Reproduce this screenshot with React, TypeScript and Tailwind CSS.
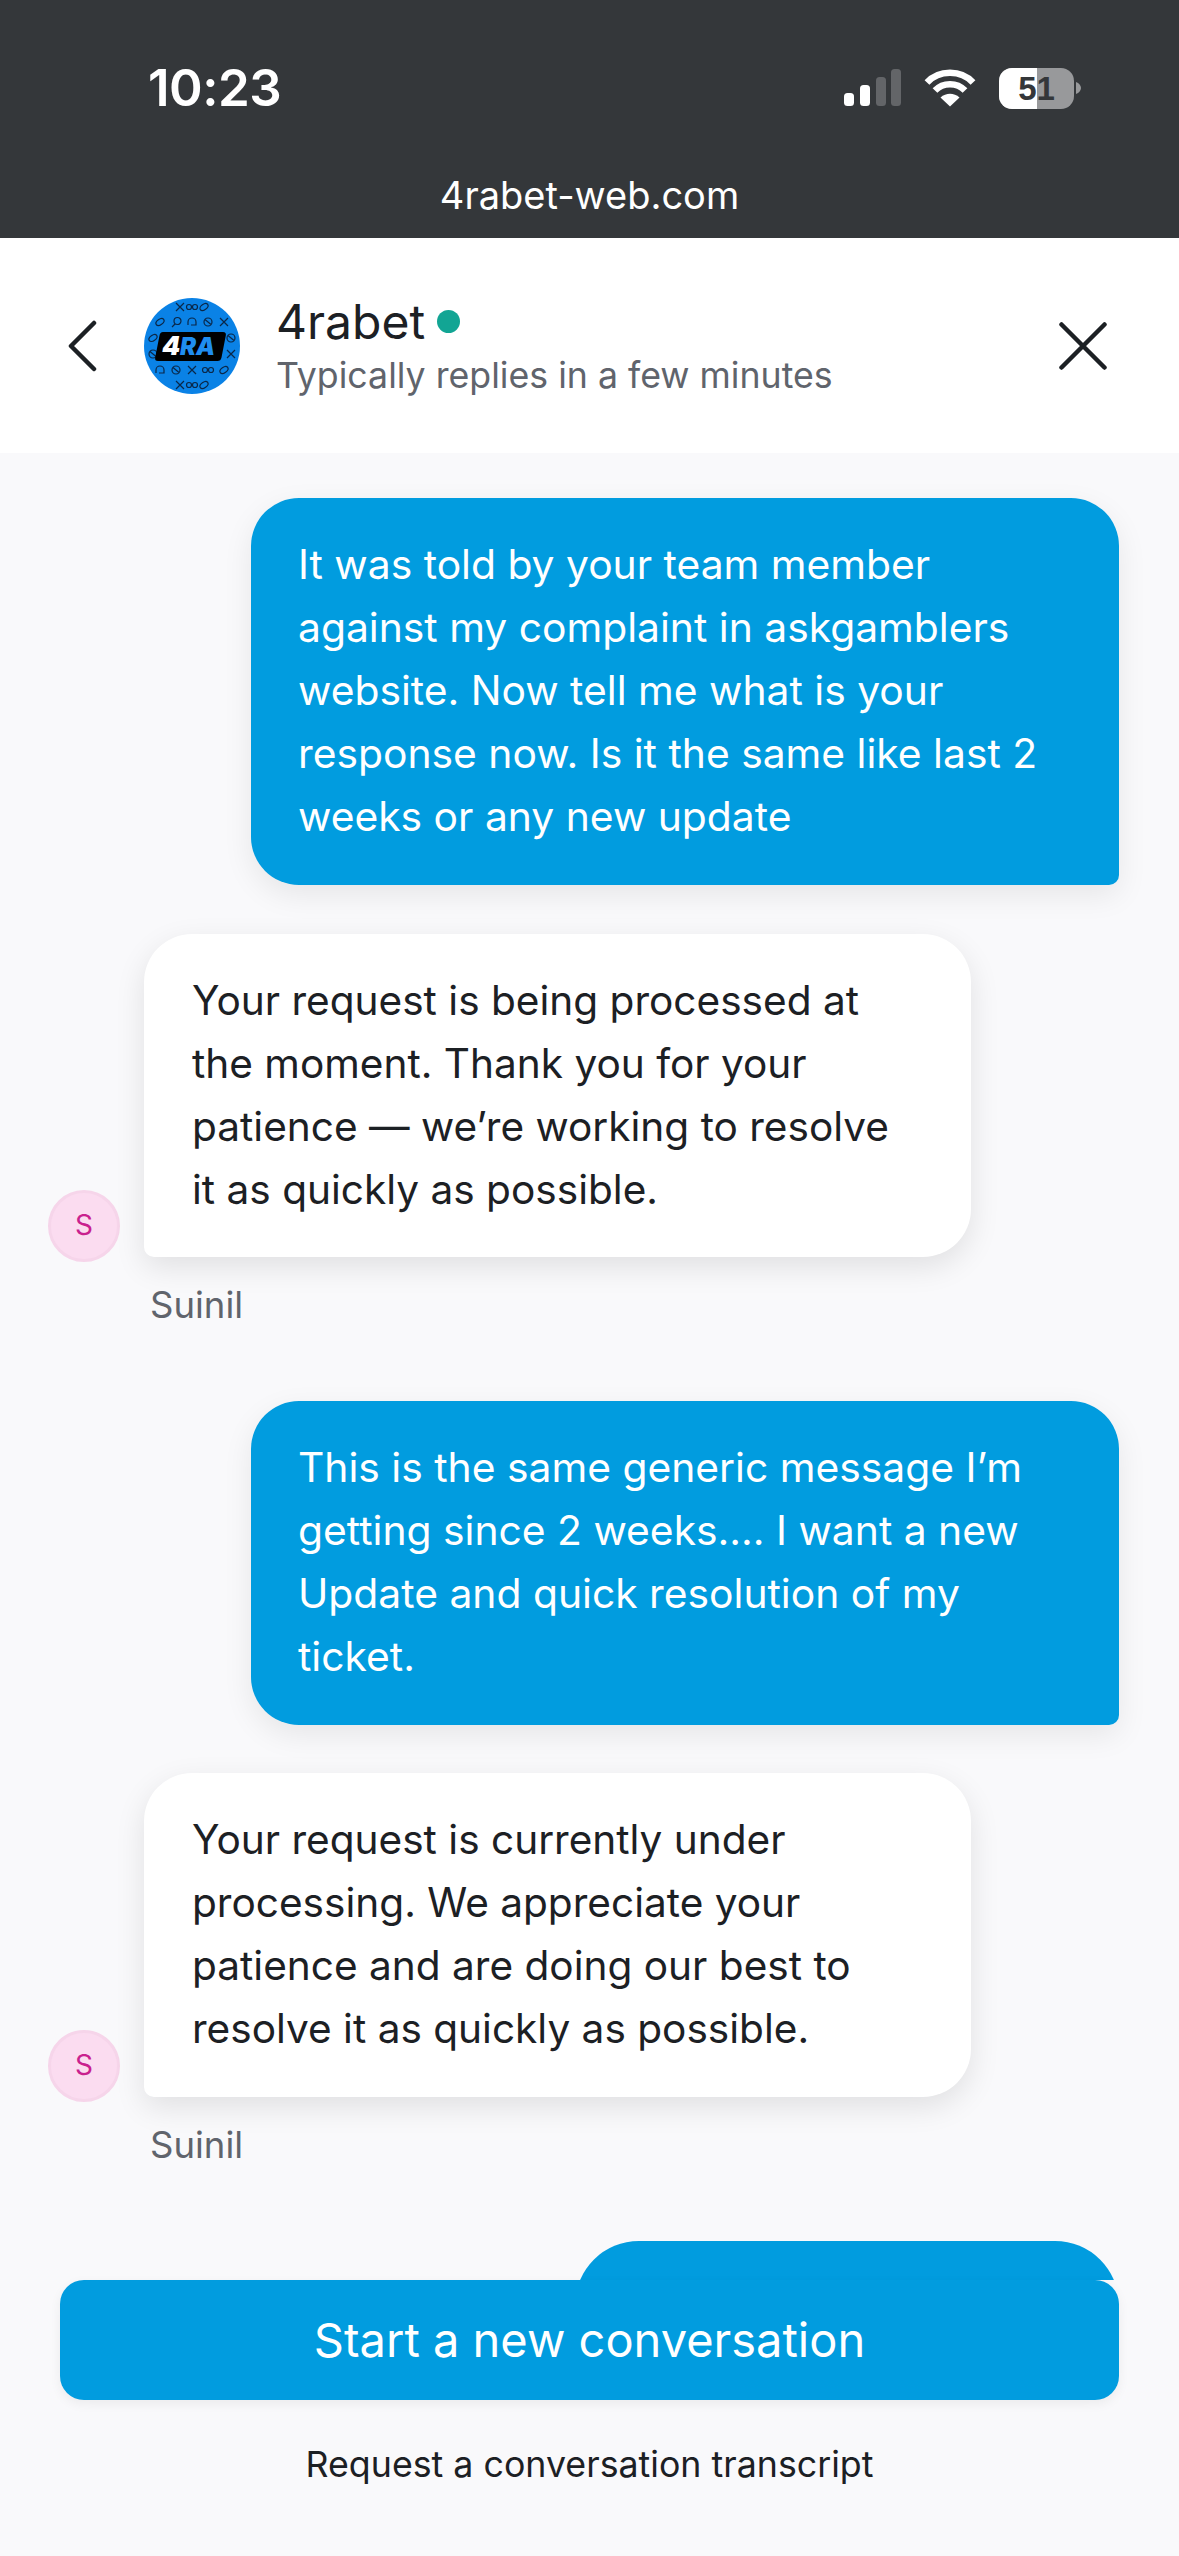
import React from "react";

const font = { fontFamily: "Inter, 'Noto Sans', sans-serif" };

function Logo() {
  const ink = "#0a2748";
  const kinds = ["ball", "cross", "bike", "oval", "racket", "helmet"];
  const rows: [number, number[]][] = [
    [9, [36, 48, 60]],
    [24, [16, 32, 48, 64, 80]],
    [72, [16, 32, 48, 64, 80]],
    [87, [36, 48, 60]],
  ];
  const items: [number, number, string][] = [];
  rows.forEach(([y, xs], r) => xs.forEach((x, i) => items.push([x, y, kinds[(i + r * 2 + 1) % kinds.length]])));
  items.push([9, 40, "oval"], [87, 40, "ball"], [9, 56, "ball"], [87, 56, "cross"]);
  return (
    <svg width="96" height="96" viewBox="0 0 96 96" className="shrink-0">
      <circle cx="48" cy="48" r="48" fill="#0a82e6" />
      <g fill="none" stroke={ink} strokeWidth="1.2">
        {items.map(([x, y, k], i) => {
          if (k === "ball") return <path key={i} d={`M${x - 4} ${y}a4 4 0 1 0 8 0a4 4 0 1 0-8 0M${x - 3} ${y - 2.500}L${x + 3} ${y + 2.500}`} />;
          if (k === "cross") return <path key={i} d={`M${x - 4} ${y - 4}L${x + 4} ${y + 4}M${x + 4} ${y - 4}L${x - 4} ${y + 4}`} />;
          if (k === "bike") return <path key={i} d={`M${x - 5.500} ${y}a2.500 2.500 0 1 0 5 0a2.500 2.500 0 1 0-5 0M${x + 0.500} ${y}a2.500 2.500 0 1 0 5 0a2.500 2.500 0 1 0-5 0`} />;
          if (k === "oval") return <ellipse key={i} cx={x} cy={y} rx="4.500" ry="2.800" transform={`rotate(-35 ${x} ${y})`} />;
          if (k === "racket") return <path key={i} d={`M${x - 2} ${y - 1}a3.500 3.500 0 1 0 7 0a3.500 3.500 0 1 0-7 0M${x - 1} ${y + 2}L${x - 4} ${y + 5}`} />;
          return <path key={i} d={`M${x - 4} ${y + 3}V${y}a4 4 0 0 1 8 0V${y + 3}H${x - 1}`} />;
        })}
      </g>
      <path d="M19 34H79Q82.500 34 81.800 37.500L77.500 59.500Q76.800 63 73.500 63H14Q10.500 63 11.200 59.500L15.500 37.500Q16 34 19 34Z" fill="#000" />
      <text x="18" y="57" fontFamily="Inter, sans-serif" fontStyle="italic" fontWeight="900" fontSize="26" fill="#fff">4</text>
      <text x="36" y="57" fontFamily="Inter, sans-serif" fontStyle="italic" fontWeight="900" fontSize="24" fill="#1f8df0">RA</text>
    </svg>
  );
}

function StatusIcons() {
  return (
    <div className="flex items-center">
      <svg width="58" height="38" viewBox="0 0 58 38" className="block">
        <rect x="0" y="24" width="10" height="13" rx="3.500" fill="#fff" />
        <rect x="16" y="16" width="10" height="21" rx="3.500" fill="#fff" />
        <rect x="32" y="8" width="10" height="29" rx="3.500" fill="#636568" />
        <rect x="47" y="0" width="10" height="37" rx="3.500" fill="#636568" />
      </svg>
      <svg width="52" height="38" viewBox="0 0 52 38" className="ml-[22px] block">
        <path d="M3 13.500C15 0.500 37 0.500 49 13.500" fill="none" stroke="#fff" strokeWidth="6.500" />
        <path d="M11 21.500C19 13 33 13 41 21.500" fill="none" stroke="#fff" strokeWidth="6.500" />
        <path d="M16.500 28.500C22 23.500 30 23.500 35.500 28.500L26 37.500Z" fill="#fff" />
      </svg>
      <div className="relative ml-[23px] h-[41px] w-[75px] overflow-hidden rounded-[13px] bg-[#98999b]">
        <div className="absolute left-0 top-0 h-full w-[38px] bg-white" />
        <div className="absolute inset-0 flex items-center justify-center text-[33px] font-bold leading-none text-[#34373a]" style={{ fontFamily: "'Liberation Sans', sans-serif" }}>
          51
        </div>
      </div>
      <svg width="5" height="12" viewBox="0 0 5 12" className="ml-[2px] block">
        <path d="M0 0C3 1 5 3.500 5 6C5 8.500 3 11 0 12Z" fill="#98999b" />
      </svg>
    </div>
  );
}

function UserBubble({ lines }: { lines: string[] }) {
  return (
    <div className="ml-auto w-[868px] rounded-[48px] rounded-br-[10px] bg-[#019cdf] pb-[37px] pl-[47px] pr-[40px] pt-[35px] text-[40.8px] leading-[63px] text-white shadow-[0_10px_30px_rgba(0,0,0,0.08)]">
      {lines.map((l) => (
        <div key={l} className="whitespace-nowrap">{l}</div>
      ))}
    </div>
  );
}

function BotBubble({ lines, tall }: { lines: string[]; tall?: boolean }) {
  return (
    <div className="flex flex-col">
      <div className="flex items-end">
        <div className="mb-[-5px] flex h-[72px] w-[72px] shrink-0 items-center justify-center rounded-full border-[3px] border-[#f6d5ea] bg-[#fbdcf0] pb-[2px] text-[28px] text-[#c9218e]">
          S
        </div>
        <div className={`${tall ? "pb-[37px]" : "pb-[36px]"} ml-[24px] w-[827px] rounded-[48px] rounded-bl-[10px] bg-white pl-[48px] pr-[40px] pt-[35px] text-[40.6px] leading-[63px] text-[#1c2024] shadow-[0_10px_30px_rgba(0,0,0,0.1)]`}>
          {lines.map((l) => (
            <div key={l} className="whitespace-nowrap">{l}</div>
          ))}
        </div>
      </div>
      <div className="ml-[102px] mt-[26px] text-[36.5px] leading-[44px] text-[#60646c]">Suinil</div>
    </div>
  );
}

export default function App() {
  return (
    <div className="flex h-[2556px] w-[1179px] flex-col overflow-hidden bg-[#f9f9fb]" style={font}>
      <div className="h-[238px] shrink-0 bg-[#34373a]">
        <div className="flex items-center justify-between pl-[148px] pr-[98px] pt-[60px]">
          <div className="text-[51px] font-semibold leading-[56px] tracking-[-0.5px] text-white">10:23</div>
          <StatusIcons />
        </div>
        <div className="mt-[54px] text-center text-[38px] leading-[50px] text-white">4rabet-web.com</div>
      </div>

      <div className="flex h-[215px] shrink-0 items-center bg-white pl-[67px] pr-[72px]">
        <svg width="32" height="52" viewBox="0 0 32 52" className="shrink-0">
          <path d="M27 3L4 26L27 49" fill="none" stroke="#1c2024" strokeWidth="4.500" strokeLinecap="round" strokeLinejoin="round" />
        </svg>
        <div className="ml-[45px]"><Logo /></div>
        <div className="ml-[36px] flex-1">
          <div className="flex items-center text-[48px] leading-[56px] text-[#1c2024]">
            4rabet
            <span className="ml-[12px] h-[23px] w-[23px] rounded-full bg-[#12a594]" />
          </div>
          <div className="mt-[2px] text-[35.7px] leading-[46px] text-[#60646c]">Typically replies in a few minutes</div>
        </div>
        <svg width="48" height="48" viewBox="0 0 48 48" className="shrink-0">
          <path d="M2.500 2.500L45.500 45.500M45.500 2.500L2.500 45.500" fill="none" stroke="#1c2024" strokeWidth="4.500" strokeLinecap="round" />
        </svg>
      </div>

      <div className="flex h-[1827px] shrink-0 flex-col overflow-hidden pl-[48px] pr-[60px] pt-[45px]">
        <UserBubble
          lines={[
            "It was told by your team member",
            "against my complaint in askgamblers",
            "website. Now tell me what is your",
            "response now. Is it the same like last 2",
            "weeks or any new update",
          ]}
        />
        <div className="mt-[49px]">
          <BotBubble
            lines={[
              "Your request is being processed at",
              "the moment. Thank you for your",
              "patience — we’re working to resolve",
              "it as quickly as possible.",
            ]}
          />
        </div>
        <div className="mt-[74px]">
          <UserBubble
            lines={[
              "This is the same generic message I’m",
              "getting since 2 weeks.... I want a new",
              "Update and quick resolution of my",
              "ticket.",
            ]}
          />
        </div>
        <div className="mt-[48px]">
          <BotBubble
            tall
            lines={[
              "Your request is currently under",
              "processing. We appreciate your",
              "patience and are doing our best to",
              "resolve it as quickly as possible.",
            ]}
          />
        </div>
        <div className="ml-auto mt-[74px] h-[200px] w-[544px] shrink-0 rounded-[64px] bg-[#019cdf]" />
      </div>

      <div className="flex flex-1 flex-col px-[60px]">
        <button className="h-[120px] w-full rounded-[24px] bg-[#019cdf] text-[47px] text-white shadow-[0_4px_12px_rgba(0,0,0,0.06)]">
          Start a new conversation
        </button>
        <div className="mt-[41px] text-center text-[35.75px] leading-[46px] text-[#1c2024]">Request a conversation transcript</div>
      </div>
    </div>
  );
}
